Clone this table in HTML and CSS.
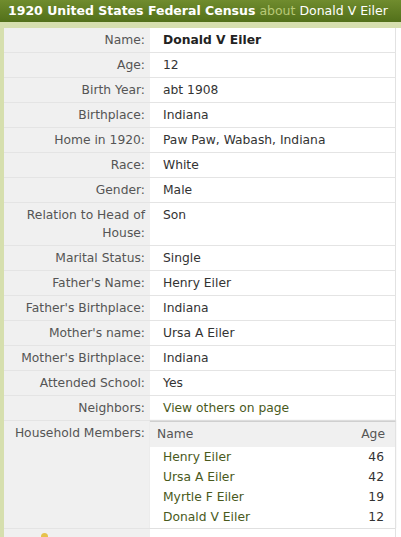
FILE: index.html
```html
<!DOCTYPE html>
<html>
<head>
<meta charset="utf-8">
<link rel="stylesheet" href="styles.css">
</head>
<body>
<div class="panel">
  <div class="hdr"><b>1920 United States Federal Census</b> <span class="about">about</span> Donald V Eiler</div>
  <div class="body">
    <div class="grid">
      <div class="lbl">Name:</div><div class="val strong">Donald V Eiler</div>
      <div class="lbl">Age:</div><div class="val">12</div>
      <div class="lbl">Birth Year:</div><div class="val">abt 1908</div>
      <div class="lbl">Birthplace:</div><div class="val">Indiana</div>
      <div class="lbl">Home in 1920:</div><div class="val">Paw Paw, Wabash, Indiana</div>
      <div class="lbl">Race:</div><div class="val">White</div>
      <div class="lbl">Gender:</div><div class="val">Male</div>
      <div class="lbl">Relation to Head of House:</div><div class="val">Son</div>
      <div class="lbl">Marital Status:</div><div class="val">Single</div>
      <div class="lbl">Father's Name:</div><div class="val">Henry Eiler</div>
      <div class="lbl">Father's Birthplace:</div><div class="val">Indiana</div>
      <div class="lbl">Mother's name:</div><div class="val">Ursa A Eiler</div>
      <div class="lbl">Mother's Birthplace:</div><div class="val">Indiana</div>
      <div class="lbl">Attended School:</div><div class="val">Yes</div>
      <div class="lbl">Neighbors:</div><div class="val link">View others on page</div>
      <div class="lbl">Household Members:</div>
      <div class="hh">
        <div class="hh-head"><span>Name</span><span>Age</span></div>
        <div class="hh-row"><span class="link">Henry Eiler</span><span>46</span></div>
        <div class="hh-row"><span class="link">Ursa A Eiler</span><span>42</span></div>
        <div class="hh-row"><span class="link">Myrtle F Eiler</span><span>19</span></div>
        <div class="hh-row"><span class="link">Donald V Eiler</span><span>12</span></div>
      </div>
      <div class="lbl last"><span class="bulb"></span></div><div class="val last"></div>
    </div>
  </div>
</div>
</body>
</html>
```
FILE: styles.css
```css
html, body { margin: 0; padding: 0; background: #ffffff; }
body { font-family: "DejaVu Sans", Verdana, sans-serif; font-size: 12.3px; line-height: 18px; color: #333; }
.panel { width: 401px; overflow: hidden; height: 537px; }
.hdr {
  height: 22px; line-height: 22px; padding-left: 8px;
  background: linear-gradient(#708c2e, #52701a);
  color: #ffffff; font-size: 12.5px; white-space: nowrap;
}
.hdr b { font-weight: bold; }
.hdr .about { color: #b9c978; }
.body { background: #d6dfae; padding: 6px 0 0 4px; }
.grid { display: grid; grid-template-columns: 146px 246px 5px; background: #fff; }
.lbl { grid-column: 1; background: #f0f0f0; color: #555; text-align: right; padding: 3px 5px 3px 10px; border-bottom: 1px solid #e4e4e4; }
.val { grid-column: 2; background: #fff; padding: 3px 13px; border-bottom: 1px solid #e4e4e4; border-right: 1px solid #e2e2e2; }
.strong { font-weight: bold; color: #222; }
.link { color: #4a5a1c; }
.hh { grid-column: 2; background: #fff; border-top: 1px solid #cfcfcf; border-bottom: 1px solid #e0e0e0; border-right: 1px solid #e2e2e2; box-shadow: 0 -1px 1px #ddd; padding-bottom: 1px; }
.hh-head { display: flex; justify-content: space-between; background: #f0f0f0; padding: 3px 10px 4px 7px; color: #555; }
.hh-row { display: flex; justify-content: space-between; height: 20px; line-height: 20px; padding: 0 11px 0 13px; }
.lbl.last, .val.last { height: 20px; border-bottom: 0; }
.lbl.last { text-align: left; padding: 0 0 0 37px; }
.bulb { display: block; width: 7px; height: 7px; border-radius: 50%; background: #e6c24c; margin-top: 4px; }
```
